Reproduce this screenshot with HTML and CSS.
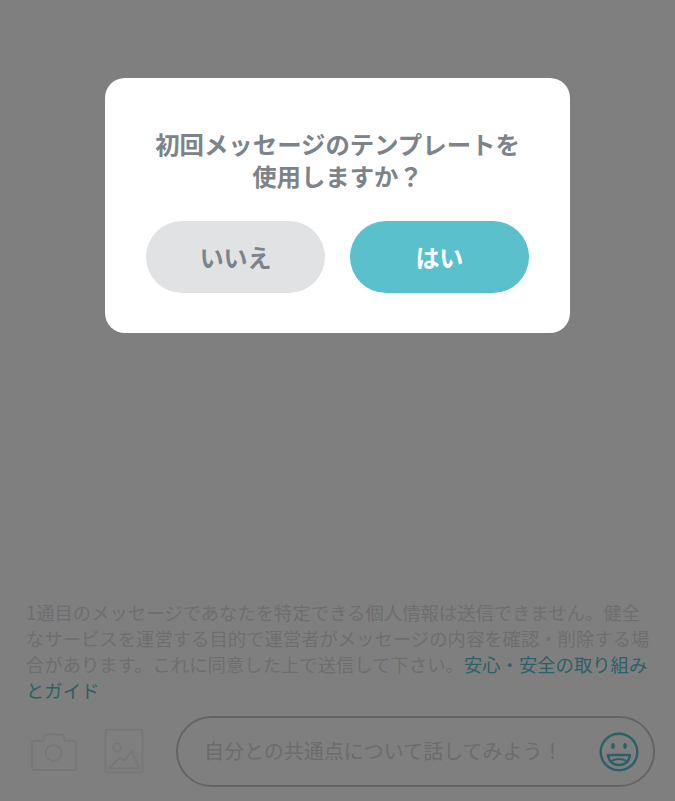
FILE: index.html
```html
<!DOCTYPE html>
<html lang="ja">
<head>
    <meta charset="UTF-8">
    <meta name="viewport" content="width=device-width, initial-scale=1.0">
    <title>メッセージ</title>
    <link rel="stylesheet" href="styles.css">
</head>
<body>
    <main class="page">
        <p class="notice">1通目のメッセージであなたを特定できる個人情報は送信できません。健全なサービスを運営する目的で運営者がメッセージの内容を確認・削除する場合があります。これに同意した上で送信して下さい。<a class="notice-link" href="#">安心・安全の取り組みとガイド</a></p>
        <div class="composer">
            <svg class="icon-camera" viewBox="0 0 48 40" fill="none" stroke="currentColor" stroke-width="2" stroke-linejoin="round">
                <path d="M4 9h9l1.500-5q.5-1.500 2-1.500h15q1.500 0 2 1.500L35 9h9q2 0 2 2v25q0 2-2 2H4q-2 0-2-2V11q0-2 2-2z"/>
                <circle cx="23.500" cy="21" r="8"/>
            </svg>
            <svg class="icon-gallery" viewBox="0 0 40 47" fill="none" stroke="currentColor" stroke-width="2" stroke-linejoin="round">
                <rect x="1.500" y="1.500" width="37" height="43" rx="2"/>
                <circle cx="13" cy="19.500" r="4"/>
                <path d="M4.500 40.500l11.500-11 4 3 8-9 7.500 17z"/>
            </svg>
            <div class="input-box">
                <span class="placeholder">自分との共通点について話してみよう！</span>
                <svg class="icon-smile" viewBox="0 0 40 40" fill="none" stroke="currentColor" stroke-width="2.400">
                    <circle cx="20" cy="20" r="18.300"/>
                    <ellipse class="eye" cx="14" cy="14" rx="1.800" ry="3"/>
                    <ellipse class="eye" cx="26" cy="14" rx="1.800" ry="3"/>
                    <path d="M9 23h22q-1.500 10-11 10T9 23z" stroke-linejoin="round"/>
                    <path d="M12 29q8-4 16 0" stroke-width="1.800"/>
                </svg>
            </div>
        </div>
    </main>

    <div class="overlay">
        <section class="dialog">
            <h2 class="dialog-title">初回メッセージのテンプレートを<br>使用しますか？</h2>
            <div class="dialog-buttons">
                <button class="btn btn-no" type="button">いいえ</button>
                <button class="btn btn-yes" type="button">はい</button>
            </div>
        </section>
    </div>
</body>
</html>
```

FILE: styles.css
```css
* {
    margin: 0;
    padding: 0;
    box-sizing: border-box;
}
html, body {
    height: 100%;
}
body {
    font-family: "Noto Sans CJK JP", "Noto Sans", sans-serif;
    background-color: #fff;
    overflow: hidden;
}
.page {
    height: 100%;
    display: flex;
    flex-direction: column;
    justify-content: flex-end;
    padding: 0 20px 14px 27px;
}
.notice {
    font-size: 18.350px;
    line-height: 26px;
    color: #dcdcdc;
    margin: 0 -3px 13px -1px;
}
.notice-link {
    color: #5ac1cc;
    text-decoration: none;
}
.composer {
    display: flex;
    align-items: center;
}
.icon-camera {
    width: 48px;
    height: 40px;
    color: #efefef;
    margin: 0 26px 0 3px;
    flex: none;
}
.icon-gallery {
    width: 40px;
    height: 47px;
    color: #efefef;
    margin-right: 32px;
    flex: none;
}
.input-box {
    flex: 1;
    height: 71px;
    border: 2px solid #c8c8c8;
    border-radius: 36px;
    display: flex;
    align-items: center;
    justify-content: space-between;
    padding: 0 14px 0 26px;
}
.placeholder {
    font-size: 20px;
    color: #d8d8d8;
    margin-top: -2px;
}
.icon-smile {
    width: 40px;
    height: 40px;
    color: #5ac1cc;
    flex: none;
}
.eye {
    fill: currentColor;
    stroke: none;
}
.overlay {
    position: fixed;
    inset: 0;
    background-color: rgba(0, 0, 0, .5);
    display: flex;
    justify-content: center;
    align-items: flex-start;
    padding-top: 77.500px;
}
.dialog {
    width: 464.500px;
    height: 255.500px;
    background-color: #fff;
    border-radius: 20px;
    padding: 50.500px 41px 0;
}
.dialog-title {
    font-size: 24.400px;
    font-weight: 700;
    line-height: 32px;
    text-align: center;
    color: #7c8389;
    white-space: nowrap;
}
.dialog-buttons {
    display: flex;
    gap: 25px;
    margin-top: 29px;
}
.btn {
    flex: 1;
    height: 71.500px;
    border: none;
    border-radius: 36px;
    font-family: inherit;
    font-size: 24px;
    font-weight: 700;
    cursor: pointer;
}
.btn-no {
    background-color: #e1e2e4;
    color: #7c8389;
}
.btn-yes {
    background-color: #5ac1cc;
    color: #fff;
}
```
